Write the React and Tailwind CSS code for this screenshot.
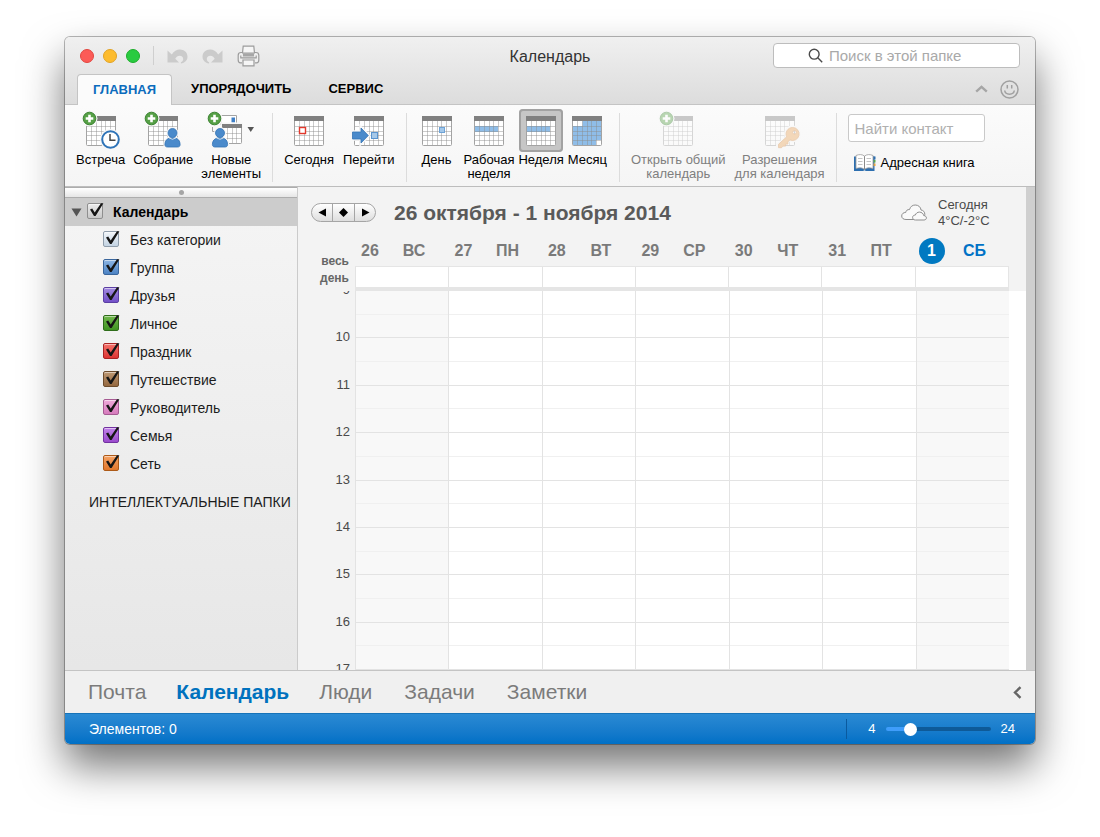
import React from "react";

const CATEGORIES = [
  { name: "Без категории", box: "border-[#8f9dab] from-[#f2f6fa] to-[#c3d3e2]" },
  { name: "Группа", box: "border-[#3a669c] from-[#8db6e4] to-[#4c83c4]" },
  { name: "Друзья", box: "border-[#5b3fa3] from-[#a48be0] to-[#7350c8]" },
  { name: "Личное", box: "border-[#2f6d1a] from-[#71b84c] to-[#3f9422]" },
  { name: "Праздник", box: "border-[#a82323] from-[#f5716b] to-[#dc3232]" },
  { name: "Путешествие", box: "border-[#6d4c2c] from-[#bd9873] to-[#94683f]" },
  { name: "Руководитель", box: "border-[#a65a92] from-[#eeaada] to-[#d67bbd]" },
  { name: "Семья", box: "border-[#7232a0] from-[#c283ea] to-[#9a4acc]" },
  { name: "Сеть", box: "border-[#ad5a18] from-[#f5a263] to-[#e0772a]" },
];

const DAYS = [
  { num: "26", name: "ВС" },
  { num: "27", name: "ПН" },
  { num: "28", name: "ВТ" },
  { num: "29", name: "СР" },
  { num: "30", name: "ЧТ" },
  { num: "31", name: "ПТ" },
  { num: "1", name: "СБ", today: true },
];

const HOURS = [9, 10, 11, 12, 13, 14, 15, 16];

/* ---------- drawings ---------- */

function Grid({ x = 7, y = 7, w = 29, h = 29, cols = 6, rows = 5, head = 5, children }) {
  const cw = w / cols;
  const rh = (h - head) / rows;
  return (
    <g>
      <rect x={x + 0.5} y={y + 0.5} width={w} height={h} rx="1" fill="#fff" />
      {children}
      {Array.from({ length: cols - 1 }, (_, i) => (
        <path key={"c" + i} d={`M${Math.round(x + cw * (i + 1)) + 0.5} ${y + head}V${y + h}`} stroke="#8c8c8c" strokeOpacity=".45" />
      ))}
      {Array.from({ length: rows - 1 }, (_, i) => (
        <path key={"r" + i} d={`M${x} ${Math.round(y + head + rh * (i + 1)) + 0.5}H${x + w}`} stroke="#8c8c8c" strokeOpacity=".45" />
      ))}
      <rect x={x + 0.5} y={y + 0.5} width={w} height={h} rx="1" fill="none" stroke="#a3a3a3" />
      <rect x={x} y={y} width={w + 1} height={head} fill="#808080" />
    </g>
  );
}

function Plus({ cx = 10.5, cy = 9.5 }) {
  return (
    <g>
      <circle cx={cx} cy={cy} r="8" fill="#f7f7f7" />
      <circle cx={cx} cy={cy} r="6.300" fill="#56a046" stroke="#3b8332" />
      <path d={`M${cx - 3.8} ${cy}h7.600M${cx} ${cy - 3.8}v7.600`} stroke="#fff" strokeWidth="2.600" />
    </g>
  );
}

function Person({ cx }) {
  const d = `M${cx - 7.6} 35.500c0-4 2.200-5.800 5-6.500h5.200c2.800.7 5 2.500 5 6.500 0 1.700-1 2.500-2.600 2.500h-10c-1.600 0-2.600-.8-2.600-2.500z`;
  return (
    <g>
      <path d={d} fill="#f7f7f7" stroke="#f7f7f7" strokeWidth="3" />
      <circle cx={cx} cy="24" r="6" fill="#f7f7f7" />
      <path d={d} fill="#4a8acb" stroke="#3474b5" strokeWidth=".8" />
      <circle cx={cx} cy="24" r="4.500" fill="#4a8acb" stroke="#3474b5" strokeWidth=".8" />
      <path d={`M${cx - 3.6} 28.900a6 6 0 0 0 7.200 0`} fill="none" stroke="#f7f7f7" strokeWidth=".8" />
    </g>
  );
}

const ICONS = {
  meeting: (
    <>
      <Grid />
      <Plus />
      <circle cx="31.500" cy="30.500" r="10.500" fill="#f7f7f7" />
      <circle cx="31.500" cy="30.500" r="8.300" fill="#fff" stroke="#2f74b8" strokeWidth="2" />
      <path d="M31 25v6.200h5.500" fill="none" stroke="#444" strokeWidth="1.500" />
    </>
  ),
  gathering: (
    <>
      <Grid />
      <Plus />
      <Person cx={31.5} />
    </>
  ),
  create: (
    <>
      <path d="M3.500 18v4.500h4" fill="none" stroke="#a3a3a3" />
      <path d="M12 6.500h15.500v9H12z" fill="#fff" stroke="#a3a3a3" />
      <rect x="22.500" y="8.500" width="3.500" height="5" fill="#3e7fc6" />
      <rect x="12" y="13.500" width="22" height="22" fill="#f7f7f7" />
      <Grid x={13} y={15} w={19} h={19} cols={4} rows={3} head={4} />
      <Plus cx={5.5} />
      <Person cx={11} />
      <path d="M38.500 18h6.500L41.750 23z" fill="#555" />
    </>
  ),
  today: (
    <>
      <Grid />
      <rect x="12.500" y="18.500" width="6" height="6" fill="#fff" stroke="#e2382c" strokeWidth="1.400" />
    </>
  ),
  go: (
    <>
      <Grid />
      <rect x="24.500" y="23.500" width="6" height="6" fill="#a6c8e8" stroke="#5a94cf" />
      <path d="M5.500 23h8.500v-4l7.300 7.500-7.300 7.500v-4H5.500z" fill="#f7f7f7" stroke="#f7f7f7" strokeWidth="3.500" />
      <path d="M5.500 23h8.500v-4l7.300 7.500-7.300 7.500v-4H5.500z" fill="#4a8acb" stroke="#3474b5" strokeWidth=".8" />
    </>
  ),
  day: (
    <>
      <Grid />
      <rect x="24.500" y="18.500" width="5" height="5" fill="#a3c8ea" stroke="#6ea3d6" />
    </>
  ),
  work: (
    <Grid>
      <rect x="8" y="17" width="23" height="6" fill="#8fbde8" />
    </Grid>
  ),
  week: (
    <Grid>
      <rect x="8" y="17" width="23" height="6" fill="#8fbde8" />
    </Grid>
  ),
  month: (
    <Grid>
      <path d="M17.500 12H36v19h-5v5H8V17h9.500z" fill="#8fbde8" />
    </Grid>
  ),
  shared: (
    <>
      <Grid />
      <Plus />
    </>
  ),
  key: (
    <>
      <Grid />
      <g stroke="#f7f7f7" strokeWidth="4" fill="none">
        <circle cx="34.500" cy="25" r="6.500" />
        <path d="M30 28L20 36v3h5" />
      </g>
      <path
        fillRule="evenodd"
        d="M34.500 18.500a6.500 6.500 0 1 1-2.600 12.400l-2 2v2.200h-2.300v2H25l-1.500 1.600h-3v-3.400l8.200-7.500a6.500 6.500 0 0 1 5.800-9.300zm2 3a1.800 1.800 0 1 0 0 3.600 1.800 1.800 0 0 0 0-3.600z"
        fill="#eba65c"
        stroke="#cf8740"
        strokeWidth=".8"
      />
    </>
  ),
};

function Book() {
  return (
    <svg width="24" height="20" viewBox="0 0 24 20" aria-hidden="true">
      <path d="M1 3.500h20.500V18H13l-1.500-.8L10 18H1z" fill="#2d6fb0" />
      <path d="M20 3.500h2.500v3H20z" fill="#2d6fb0" />
      <path d="M20.500 7h2v2.500h-2z" fill="#58a94a" />
      <path d="M20.500 10.500h2V13h-2z" fill="#e7a33c" />
      <path d="M3 2.500c3-1.300 6.500-1.300 8.500.7 2-2 5.500-2 8.500-.7V15.500c-3-1-6.500-1-8.500 1-2-2-5.500-2-8.500-1z" fill="#fff" stroke="#9a9a9a" strokeWidth=".8" />
      <path d="M11.500 3.200v13.300" stroke="#8a8a8a" />
      <path d="M5 5.500h4.500M5 8.500h4.500M5 11.500h4.500M13.500 5.500H18M13.500 8.500H18M13.500 11.500H18" stroke="#c4c4c4" />
    </svg>
  );
}

/* ---------- controls ---------- */

function ToolButton({ icon, lines, active, disabled }) {
  return (
    <button
      type="button"
      disabled={disabled}
      aria-pressed={active}
      className={`flex flex-col items-center text-[13px] leading-[14px] whitespace-nowrap ${disabled ? "text-[#7f7f7f]" : "text-black"}`}
    >
      <span
        className={`-mx-2 mb-px flex h-[43px] w-11 items-center justify-center rounded-[4px] ${active ? "bg-[#c6c6c6] shadow-[inset_0_0_0_2px_#a2a2a2]" : ""}`}
      >
        <svg width="44" height="43" viewBox="0 0 44 43" overflow="visible" aria-hidden="true" opacity={disabled ? 0.4 : 1}>
          {ICONS[icon]}
        </svg>
      </span>
      {lines.map((l) => (
        <span key={l}>{l}</span>
      ))}
    </button>
  );
}

function Separator() {
  return <div className="mx-[11px] my-1 w-px self-stretch bg-[#dcdcdc]" />;
}

function Check({ id, box }) {
  return (
    <span className="relative -mt-[2px] flex h-[16px] w-[16px] shrink-0">
      <input
        id={id}
        type="checkbox"
        defaultChecked
        className={`peer h-[16px] w-[16px] appearance-none rounded-[2px] border bg-linear-to-b shadow-[inset_0_1px_0_rgba(255,255,255,0.5)] ${box}`}
      />
      <svg className="pointer-events-none absolute inset-0 hidden peer-checked:block" width="17" height="16" viewBox="0 0 17 16" aria-hidden="true">
        <path d="M3 6.600l2.200-1.200 2.500 4L14 .3h2.400L8.600 13H7z" fill="#151515" />
      </svg>
    </span>
  );
}

/* ---------- sections ---------- */

const UNDO = "M.5 2.500v12h11.500L8.300 10.800C9.300 9 10.700 7.800 12.700 7.800c2.200 0 3.500 1.400 3.500 3.200 0 1.500-.9 2.600-2.300 3.200v1.300c4-.5 6.600-3.200 6.600-6.700C20.500 4.500 17.300 1.500 13 1.500c-3.300 0-6.200 1.700-8.200 4.900z";

function TitleBar() {
  return (
    <div className="grid h-[37px] grid-cols-[1fr_auto_1fr] items-center pr-[15px] pl-[15px]">
      <div className="flex items-center">
        <div className="flex gap-[9px]">
          <button type="button" aria-label="Закрыть" className="h-[14px] w-[14px] rounded-full border border-[#e2463f] bg-[#fc5b57]" />
          <button type="button" aria-label="Свернуть" className="h-[14px] w-[14px] rounded-full border border-[#e1a325] bg-[#fdbc2e]" />
          <button type="button" aria-label="Развернуть" className="h-[14px] w-[14px] rounded-full border border-[#1dad2b] bg-[#29cb40]" />
        </div>
        <div className="mx-[13px] h-[19px] w-px bg-[#cfcfcf]" />
        <div className="flex items-center gap-[14px]">
          <button type="button" aria-label="Отменить" className="text-[#cbcbcb]">
            <svg width="21" height="16" viewBox="0 0 21 16" aria-hidden="true">
              <path d={UNDO} fill="currentColor" />
            </svg>
          </button>
          <button type="button" aria-label="Повторить" className="text-[#cbcbcb]">
            <svg width="21" height="16" viewBox="0 0 21 16" aria-hidden="true">
              <path transform="matrix(-1 0 0 1 21 0)" d={UNDO} fill="currentColor" />
            </svg>
          </button>
          <button type="button" aria-label="Печать">
            <svg width="23" height="22" viewBox="0 0 23 22" fill="none" stroke="#9c9c9c" strokeWidth="1.200" aria-hidden="true">
              <path d="M5.500 8L6.200 1.200h10.600l.7 6.800z" fill="#f6f6f6" />
              <path d="M5 7.500H4C2.200 7.500 1.200 8.500 1.200 10.300V15c0 1.800.8 2.800 2.300 2.800H5M18 7.500h1c1.800 0 2.800 1 2.800 2.800V15c0 1.800-.8 2.800-2.300 2.800H18" fill="#f0f0f0" />
              <path d="M6 8.200h11v3.300H6z" fill="#a6a6a6" stroke="none" />
              <path d="M3.800 10.500v2.300h15.400v-2.300" />
              <path d="M6 15h11v5.800H6z" fill="#f6f6f6" />
            </svg>
          </button>
        </div>
      </div>
      <h1 className="pt-[2px] text-[16px] text-[#333]">Календарь</h1>
      <label className="flex h-[25px] w-[247px] items-center gap-[6px] justify-self-end rounded-[4px] border border-[#bdbdbd] bg-white pl-[34px]">
        <svg width="15" height="15" viewBox="0 0 15 15" fill="none" stroke="#4a4a4a" strokeWidth="1.400" aria-hidden="true">
          <circle cx="6.200" cy="6.200" r="4.900" />
          <path d="M9.800 9.800l4.400 4.400" />
        </svg>
        <input type="search" aria-label="Поиск в этой папке" placeholder="Поиск в этой папке" className="min-w-0 flex-1 bg-transparent pt-[2px] text-[15px] outline-none placeholder:text-[#a9a9a9]" />
      </label>
    </div>
  );
}

function TabBar() {
  return (
    <div className="flex h-[31px] items-stretch border-b border-[#c4c4c4] pr-[16px] pl-3 text-[13px] font-bold text-black">
      <button type="button" className="-mb-px rounded-t-[4px] border border-b-0 border-[#c4c4c4] bg-[#fbfbfb] px-[15px] text-[#0b6cbd]">ГЛАВНАЯ</button>
      <button type="button" className="px-[19px]">УПОРЯДОЧИТЬ</button>
      <button type="button" className="px-[18px]">СЕРВИС</button>
      <div className="ml-auto flex items-center gap-[12px]">
        <button type="button" aria-label="Свернуть ленту">
          <svg width="13" height="8" viewBox="0 0 13 8" fill="none" stroke="#a6a6a6" strokeWidth="2.400" aria-hidden="true">
            <path d="M1.200 6.600l5.300-4.800 5.300 4.800" />
          </svg>
        </button>
        <button type="button" aria-label="Отзыв">
          <svg width="19" height="19" viewBox="0 0 19 19" fill="none" stroke="#a0a0a0" strokeWidth="1.500" aria-hidden="true">
            <circle cx="9.500" cy="9.500" r="8.500" />
            <path d="M7.300 5v3.500M11.700 5v3.500" />
            <path d="M4.700 10.500c.6 4.900 9 4.900 9.600 0" />
          </svg>
        </button>
      </div>
    </div>
  );
}

function Ribbon() {
  return (
    <div className="flex h-[82px] shrink-0 items-start overflow-hidden border-b border-[#bdbdbd] bg-linear-to-b from-[#fbfbfb] to-[#f5f5f5] pt-[4px] pl-[11px]">
      <div className="flex gap-2">
        <ToolButton icon="meeting" lines={["Встреча"]} />
        <ToolButton icon="gathering" lines={["Собрание"]} />
        <ToolButton icon="create" lines={["Новые", "элементы"]} />
      </div>
      <Separator />
      <div className="flex gap-[9px]">
        <ToolButton icon="today" lines={["Сегодня"]} />
        <ToolButton icon="go" lines={["Перейти"]} />
      </div>
      <Separator />
      <div className="flex gap-3 pl-1">
        <ToolButton icon="day" lines={["День"]} />
        <div className="flex gap-1">
          <ToolButton icon="work" lines={["Рабочая", "неделя"]} />
          <ToolButton icon="week" lines={["Неделя"]} active />
          <ToolButton icon="month" lines={["Месяц"]} />
        </div>
      </div>
      <div className="mr-[11px] ml-3 my-1 w-px self-stretch bg-[#dcdcdc]" />
      <div className="flex gap-[9px]">
        <ToolButton icon="shared" lines={["Открыть общий", "календарь"]} disabled />
        <ToolButton icon="key" lines={["Разрешения", "для календаря"]} disabled />
      </div>
      <Separator />
      <div className="flex flex-col items-start gap-[11px] pt-[5px]">
        <input type="text" aria-label="Найти контакт" placeholder="Найти контакт" className="h-[28px] w-[137px] rounded-[3px] border border-[#c9c9c9] bg-white px-[6px] text-[15px] outline-none placeholder:text-[#b0b0b0]" />
        <button type="button" className="flex items-center gap-1 pl-[5px] text-[13px] text-black">
          <Book />
          Адресная книга
        </button>
      </div>
    </div>
  );
}

function Sidebar() {
  return (
    <aside className="flex w-[233px] shrink-0 flex-col border-r border-[#cbcbcb] bg-linear-to-b from-[#f5f5f5] to-[#e7e7e7] text-[14px] text-[#1c1c1c]">
      <div className="flex h-[11px] items-center justify-center border-t border-b border-[#adadad] bg-linear-to-b from-white to-[#e6e6e6]">
        <span className="h-[5px] w-[5px] rounded-full bg-[#a5a5a5]" />
      </div>
      <div className="flex h-[28px] items-center bg-[#cccccc] pl-[6px]">
        <button type="button" aria-label="Свернуть список" className="mr-[5px]">
          <svg width="11" height="9" viewBox="0 0 11 9" aria-hidden="true">
            <path d="M.5.500h10L5.500 8.500z" fill="#555" />
          </svg>
        </button>
        <Check id="cat-all" box="border-[#8f8f8f] from-[#ececec] to-[#c8c8c8]" />
        <label htmlFor="cat-all" className="pt-px pl-[10px] font-bold text-black">Календарь</label>
      </div>
      <ul>
        {CATEGORIES.map((c, i) => (
          <li key={c.name} className="flex h-[28px] items-center pl-[38px]">
            <Check id={"cat-" + i} box={c.box} />
            <label htmlFor={"cat-" + i} className="pl-[11px]">{c.name}</label>
          </li>
        ))}
      </ul>
      <h2 className="pt-[14px] pl-6 whitespace-nowrap">ИНТЕЛЛЕКТУАЛЬНЫЕ ПАПКИ</h2>
    </aside>
  );
}

function CalendarHead() {
  const seg = "flex h-full items-center justify-center";
  return (
    <div className="flex h-[51px] shrink-0 items-center pr-[19px] pl-[13px]">
      <div className="flex h-[19px] divide-x divide-[#a5a5a5] overflow-hidden rounded-full border border-[#a5a5a5] bg-linear-to-b from-white to-[#dedede]">
        <button type="button" aria-label="Предыдущая неделя" className={seg + " w-[21px]"}>
          <svg width="9" height="9" viewBox="0 0 9 9" aria-hidden="true"><path d="M8 .5v8L.5 4.500z" /></svg>
        </button>
        <button type="button" aria-label="Текущая неделя" className={seg + " w-[22px]"}>
          <svg width="9" height="9" viewBox="0 0 9 9" aria-hidden="true"><path d="M4.500 0L9 4.500 4.500 9 0 4.500z" /></svg>
        </button>
        <button type="button" aria-label="Следующая неделя" className={seg + " w-[20px]"}>
          <svg width="9" height="9" viewBox="0 0 9 9" aria-hidden="true"><path d="M1 .5v8l7.500-4z" /></svg>
        </button>
      </div>
      <h2 className="pl-[18px] text-[21px] font-bold text-[#5a5a5a]">26 октября - 1 ноября 2014</h2>
      <svg className="mr-[11px] ml-auto" width="26" height="18" viewBox="0 0 26 18" fill="#fafafa" stroke="#8e8e8e" aria-hidden="true">
        <path d="M5 15.500c-2.700 0-4.300-1.500-4.300-3.500 0-2.200 1.800-3.600 4-3.500C5 6.500 6.500 5.300 8.500 5.600 9.300 2.600 11.500 1 14.200 1c3.300 0 5.600 2.200 5.800 5 2.200.2 4 2 3.800 4.500l-1 5z" />
        <path d="M14.500 16c-1.700 0-2.900-1-2.900-2.500s1.200-2.500 2.700-2.400c.6-1.900 2.200-3 4.100-3 2.300 0 4 1.500 4.300 3.500 1.600.1 2.700 1 2.700 2.300 0 1.300-1 2.100-2.500 2.100z" />
      </svg>
      <div className="w-[69px] text-[13px] leading-4 text-[#4a4a4a]">
        <div>Сегодня</div>
        <div className="whitespace-nowrap">4°C/-2°C</div>
      </div>
    </div>
  );
}

function WeekView() {
  return (
    <div className="flex min-h-0 flex-1 flex-col">
      <div className="flex h-[53px] shrink-0 pr-[17px]">
        <div className="flex w-[57px] shrink-0 flex-col items-end justify-end pr-[6px] pb-[4px] text-right text-[12px] leading-[17px] font-bold text-[#666]">
          <span>весь</span>
          <span>день</span>
        </div>
        <div className="flex min-w-0 flex-1 flex-col">
          <div className="grid h-[28px] grid-cols-7 text-[16px] font-bold">
            {DAYS.map((d) => (
              <div key={d.num} className={`flex items-center pb-[2px] text-center ${d.today ? "text-[#0072c6]" : "text-[#7a7a7a]"}`}>
                {d.today ? (
                  <span className="mr-px ml-[3px] flex h-[26px] w-[26px] items-center justify-center rounded-full bg-[#0179c1] text-white">{d.num}</span>
                ) : (
                  <span className="w-[30px]">{d.num}</span>
                )}
                <span className="w-[58px]">{d.name}</span>
              </div>
            ))}
          </div>
          <div className="grid flex-1 grid-cols-7 border-t border-r border-b-[4px] border-[#e5e5e5] bg-white">
            {DAYS.map((d) => (
              <div key={d.num} className="border-l border-[#e3e3e3]" />
            ))}
          </div>
        </div>
      </div>
      <div className="flex min-h-0 flex-1 overflow-hidden">
        <div className="flex w-[57px] shrink-0 flex-col pr-[5px] text-right text-[13px] leading-[16px] text-[#4a4a4a]">
          {HOURS.map((h) => (
            <div key={h} className="min-h-0 flex-1 basis-0">
              <div className="-mt-[9px]">{h}</div>
            </div>
          ))}
          <div className="h-0">
            <div className="-mt-[9px]">17</div>
          </div>
        </div>
        <div className="grid min-w-0 flex-1 grid-cols-7">
          {DAYS.map((d, i) => (
            <div key={d.num} className={`flex flex-col border-l border-[#e3e3e3] ${i === 0 || i === 6 ? "bg-[#f8f8f8]" : "bg-white"}`}>
              {HOURS.map((h) => (
                <div key={h} className="flex min-h-0 flex-1 basis-0 flex-col border-b border-[#e3e3e3]">
                  <div className="flex-1 border-b border-[#f0f0f0]" />
                  <div className="flex-1" />
                </div>
              ))}
            </div>
          ))}
        </div>
        <div className="w-[17px] shrink-0 bg-white" />
      </div>
    </div>
  );
}

function BottomNav() {
  return (
    <nav className="flex h-[43px] shrink-0 items-center gap-[32px] border-t border-[#c4c4c4] bg-[#f0f0f0] pr-[13px] pl-[23px] text-[21px] text-[#7b7b7b]">
      <a href="#mail">Почта</a>
      <a href="#calendar" className="-mx-[2px] font-bold text-[#0072be]">Календарь</a>
      <a href="#people">Люди</a>
      <a href="#tasks">Задачи</a>
      <a href="#notes">Заметки</a>
      <button type="button" aria-label="Свернуть" className="ml-auto">
        <svg width="9" height="13" viewBox="0 0 9 13" fill="none" stroke="#666" strokeWidth="2.400" aria-hidden="true">
          <path d="M7.500 1.200L2 6.500l5.500 5.300" />
        </svg>
      </button>
    </nav>
  );
}

function StatusBar() {
  return (
    <footer className="flex h-[31px] shrink-0 items-center border-t border-[#1673b9] bg-linear-to-b from-[#2a8ad3] to-[#0070c6] pr-[20px] pl-6 text-[14px] text-white">
      <span>Элементов: 0</span>
      <div className="ml-auto h-[20px] w-px bg-[#0a5a9f]" />
      <label htmlFor="span" className="pl-[21px] text-[13px]">4</label>
      <input
        id="span"
        type="range"
        min="4"
        max="24"
        defaultValue="8"
        className="mx-[10px] h-[4px] w-[105px] appearance-none rounded-full bg-linear-to-r from-[#3f9dfb] from-25% to-[#0e5a98] to-25% [&::-webkit-slider-thumb]:h-[13px] [&::-webkit-slider-thumb]:w-[13px] [&::-webkit-slider-thumb]:appearance-none [&::-webkit-slider-thumb]:rounded-full [&::-webkit-slider-thumb]:bg-white"
      />
      <span className="text-[13px]">24</span>
    </footer>
  );
}

export default function App() {
  return (
    <div className="flex h-screen bg-white px-[65px] pt-[37px] pb-[93px] font-['Liberation_Sans',Arial,sans-serif]">
      <main className="flex min-w-0 flex-1 flex-col overflow-hidden rounded-[5px] bg-[#f3f3f3] shadow-[0_0_0_1px_rgba(0,0,0,0.28),0_22px_42px_rgba(0,0,0,0.55)]">
        <header className="shrink-0 bg-linear-to-b from-[#f0f0f0] to-[#dcdcdc]">
          <TitleBar />
          <TabBar />
        </header>
        <Ribbon />
        <div className="flex min-h-0 flex-1">
          <Sidebar />
          <section className="flex min-w-0 flex-1 flex-col bg-[#f3f3f3]">
            <CalendarHead />
            <WeekView />
          </section>
          <div className="w-[9px] shrink-0 bg-[#cfcfcf]" />
        </div>
        <BottomNav />
        <StatusBar />
      </main>
    </div>
  );
}
